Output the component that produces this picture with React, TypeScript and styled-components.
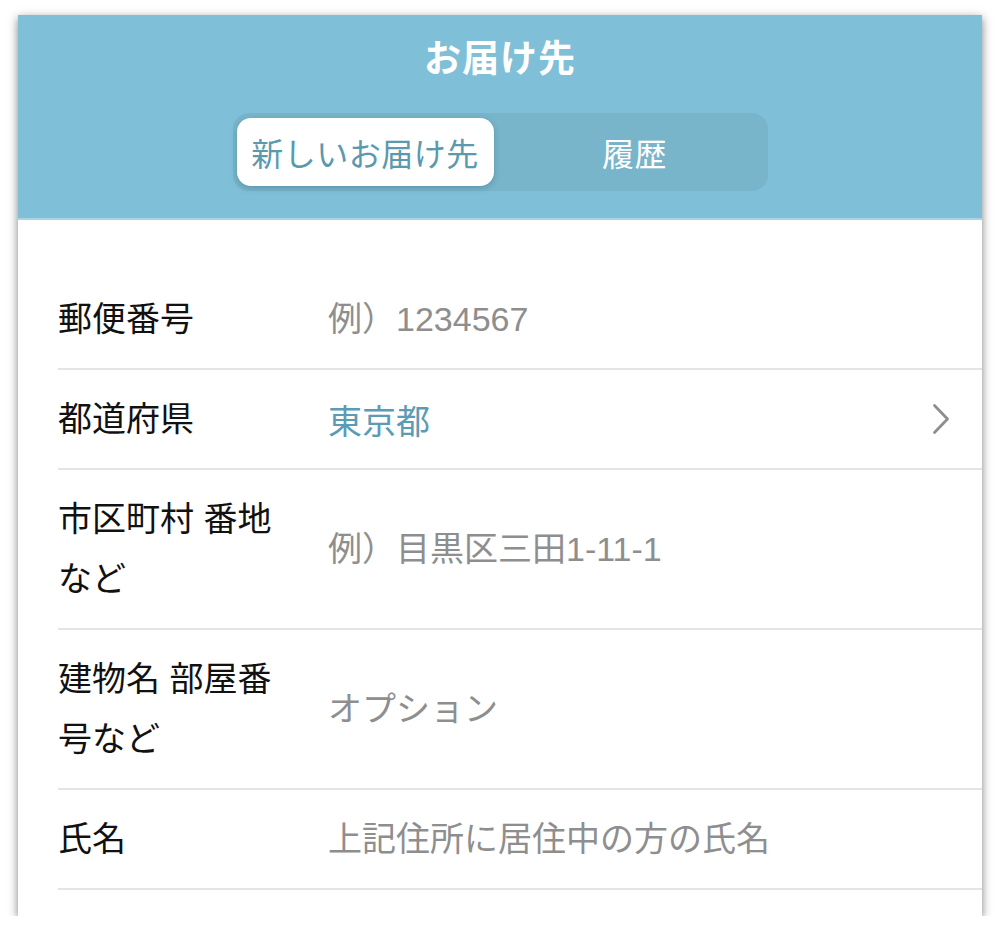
import React from "react";
import styled, { createGlobalStyle } from "styled-components";

const FONT = `"Liberation Sans", "Noto Sans CJK JP", sans-serif`;

const Global = createGlobalStyle`
  html, body { margin: 0; padding: 0; background: #ffffff; }
  body { font-family: ${FONT}; }
  * { box-sizing: border-box; }
`;

const Card = styled.div`
  width: 964px;
  margin: 15px 0 0 18px;
  background: #ffffff;
  box-shadow: 0 3px 9px rgba(0, 0, 0, 0.5);
  padding-bottom: 26px;
`;

const Header = styled.header`
  height: 205px;
  background: #7fbfd7;
  border-bottom: 2px solid #a8d4e4;
  display: flex;
  flex-direction: column;
  align-items: center;
  padding-top: 22px;
`;

const Title = styled.h1`
  margin: 0;
  font-size: 37px;
  line-height: 46px;
  font-weight: 700;
  color: #ffffff;
  letter-spacing: 1px;
`;

const Segmented = styled.div`
  margin-top: 30px;
  width: 535px;
  height: 78px;
  padding: 5px 4px;
  border-radius: 16px;
  background: #78b5cb;
  display: flex;
`;

const Segment = styled.button<{ $active?: boolean; $w: number }>`
  width: ${(p) => p.$w}px;
  height: 68px;
  border: none;
  border-radius: 14px;
  font-family: ${FONT};
  font-size: 32px;
  letter-spacing: 0.5px;
  cursor: pointer;
  display: flex;
  align-items: center;
  justify-content: center;
  padding: ${(p) => (p.$active ? "0" : "0 0 0 12px")};
  background: ${(p) => (p.$active ? "#ffffff" : "transparent")};
  color: ${(p) => (p.$active ? "#5b99af" : "#ffffff")};
  box-shadow: ${(p) => (p.$active ? "0 2px 6px rgba(40, 90, 110, 0.35)" : "none")};
`;

const Form = styled.div`
  padding-top: 50px;
`;

const Row = styled.div`
  margin-left: 40px;
  padding: 19px 0;
  border-bottom: 2px solid #e4e4e4;
  display: flex;
  align-items: center;
`;

const Label = styled.div`
  flex: 0 0 270px;
  padding-right: 40px;
  font-size: 34px;
  line-height: 60px;
  color: #111111;
`;

const Input = styled.input`
  flex: 1;
  min-width: 0;
  border: none;
  outline: none;
  background: transparent;
  padding: 0;
  height: 60px;
  font-family: ${FONT};
  font-size: 34px;
  color: #111111;
  &::placeholder {
    color: #8e8e8e;
  }
`;

const Select = styled.div`
  flex: 1;
  display: flex;
  align-items: center;
  justify-content: space-between;
  height: 60px;
  padding-right: 32px;
  cursor: pointer;
`;

const SelectValue = styled.span`
  font-size: 34px;
  color: #5b9bb4;
`;

const Chevron = () => (
  <svg width="18" height="32" viewBox="0 0 18 32" fill="none">
    <path d="M2.5 2.5 L15.5 16 L2.5 29.5" stroke="#8e8e8e" strokeWidth="2.8" strokeLinecap="round" strokeLinejoin="round" />
  </svg>
);

export default function App() {
  return (
    <>
      <Global />
      <Card>
        <Header>
          <Title>お届け先</Title>
          <Segmented>
            <Segment $active $w={257}>新しいお届け先</Segment>
            <Segment $w={270}>履歴</Segment>
          </Segmented>
        </Header>
        <Form>
          <Row>
            <Label>郵便番号</Label>
            <Input placeholder="例）1234567" />
          </Row>
          <Row>
            <Label>都道府県</Label>
            <Select>
              <SelectValue>東京都</SelectValue>
              <Chevron />
            </Select>
          </Row>
          <Row>
            <Label>市区町村 番地など</Label>
            <Input placeholder="例）目黒区三田1-11-1" />
          </Row>
          <Row>
            <Label>建物名 部屋番号など</Label>
            <Input placeholder="オプション" />
          </Row>
          <Row>
            <Label>氏名</Label>
            <Input placeholder="上記住所に居住中の方の氏名" />
          </Row>
        </Form>
      </Card>
    </>
  );
}
